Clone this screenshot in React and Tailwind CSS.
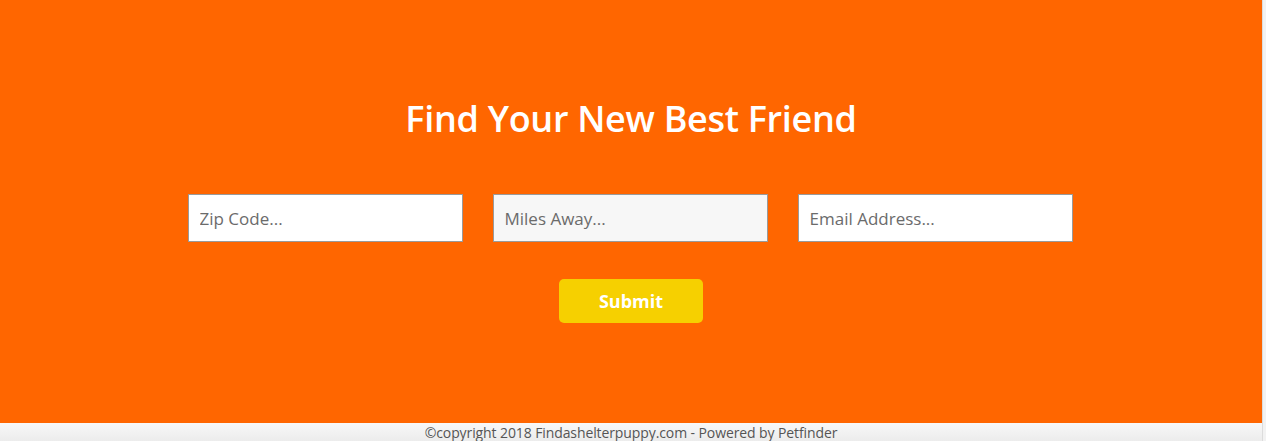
import React from 'react';

const SearchForm = () => {
  const inputClass =
    'w-[275px] h-[48px] px-[11px] border border-[#9a9a9a] text-[17px] text-[#555] placeholder:text-[#6b6b6b] outline-none';

  return (
    <form className="flex flex-col items-center" onSubmit={(e) => e.preventDefault()}>
      <div className="flex gap-[30px] -ml-[2px]">
        <input type="text" placeholder="Zip Code..." className={`${inputClass} bg-white`} />
        <input type="text" placeholder="Miles Away..." className={`${inputClass} bg-[#f7f7f7]`} />
        <input type="text" placeholder="Email Address..." className={`${inputClass} bg-white`} />
      </div>
      <button
        type="submit"
        className="mt-[37px] w-[144px] h-[44px] rounded-[5px] bg-[#f6d000] text-white text-[18px] font-bold"
      >
        Submit
      </button>
    </form>
  );
};

const App = () => {
  return (
    <div className="flex h-[441px] w-full" style={{ fontFamily: '"Open Sans", "Liberation Sans", sans-serif' }}>
      <div className="flex flex-col w-[1262px]">
        <main className="h-[423px] bg-[#ff6600] flex flex-col items-center pt-[97px]">
          <h1 className="text-[36px] leading-[44px] font-semibold text-white tracking-[-0.3px] mb-[53px]">
            Find Your New Best Friend
          </h1>
          <SearchForm />
        </main>
        <footer className="h-[18px] bg-gradient-to-b from-[#f8f8f8] to-[#ececec] flex justify-center">
          <p className="text-[14px] leading-[22px] text-[#555] -mt-[1px] tracking-[-0.1px]">
            ©copyright 2018 Findashelterpuppy.com - Powered by Petfinder
          </p>
        </footer>
      </div>
      <div className="w-[4px] bg-[#f2f2f2] border-l border-[#dcdcdc]" />
    </div>
  );
};

export default App;
